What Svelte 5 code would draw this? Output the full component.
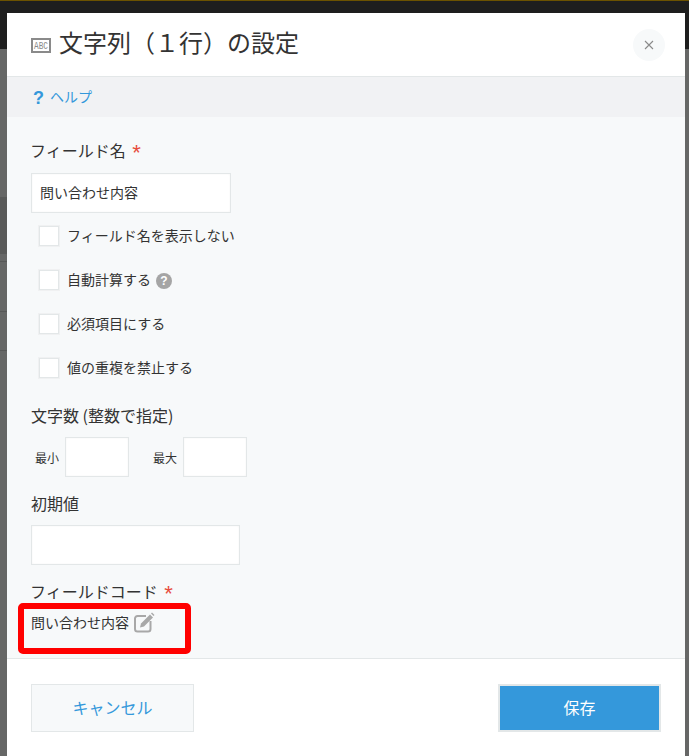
<script>
    const options = [
        { label: "フィールド名を表示しない" },
        { label: "自動計算する", help: true },
        { label: "必須項目にする" },
        { label: "値の重複を禁止する" },
    ];
</script>

<style>
    :global(body) {
        margin: 0;
        background: #666766;
    }

    .page {
        position: relative;
        width: 689px;
        height: 756px;
        overflow: hidden;
        box-sizing: border-box;
        padding: 13px 4px 0 7px;
        font-family: "Noto Sans CJK JP", "Noto Sans", sans-serif;
        color: #333;
        background: linear-gradient(#1e1e1e, #1e1e1e) 0 0 / 100% 49px no-repeat, #666766;
    }

    /* what shows of the page behind the dialog, left edge only */
    .behind {
        position: absolute;
        left: 0;
        top: 197px;
        width: 7px;
        height: 57px;
        background: #595a59;
    }

    .rule {
        position: absolute;
        left: 0;
        width: 7px;
        height: 1px;
        background: #575857;
    }

    .gold {
        position: absolute;
        left: 0;
        top: 0;
        right: 0;
        height: 1px;
        background: #6b5200;
    }

    .dialog {
        position: relative;
        height: 743px;
        background: #fff;
        display: flex;
        flex-direction: column;
    }

    .head {
        height: 64px;
        flex: none;
        box-sizing: border-box;
        border-bottom: 1px solid #e3e7e8;
        padding: 0 20px 0 24px;
        display: flex;
        align-items: center;
        gap: 8px;
    }

    .head h1 {
        margin: 0 0 5px;
        font-size: 24px;
        font-weight: 400;
        line-height: 32px;
        flex: 1;
        color: #333;
    }

    .abc {
        flex: none;
        width: 20px;
        height: 15px;
        margin-top: 1px;
    }

    .close {
        width: 32px;
        height: 32px;
        border-radius: 50%;
        background: #f7f9fa;
        display: flex;
        align-items: center;
        justify-content: center;
        flex: none;
    }

    .helpbar {
        height: 40px;
        flex: none;
        box-sizing: border-box;
        background: #f1f2f4;
        padding: 0 24px 0 26px;
        display: flex;
        align-items: center;
        gap: 6px;
        color: #3498db;
        font-size: 14px;
    }

    .helpbar span + span {
        margin-top: -2px;
    }

    .q {
        font-family: "Liberation Sans", sans-serif;
        font-weight: 700;
        font-size: 18px;
        line-height: 20px;
        margin-top: 1px;
    }

    .body {
        flex: none;
        height: 541px;
        box-sizing: border-box;
        background: #f7f9fa;
        padding: 21px 24px 0;
        position: relative;
    }

    .label {
        font-size: 16px;
        line-height: 24px;
        color: #333;
    }

    .kana {
        margin-left: -1px;
    }

    .req {
        color: #e74c3c;
        font-family: "Liberation Sans", sans-serif;
        font-size: 22px;
        line-height: 16px;
        vertical-align: -3px;
        margin-left: 3px;
    }

    .box {
        box-sizing: border-box;
        background: #fff;
        border: 1px solid #e3e7e8;
        box-shadow: inset 0 0 2px rgba(0, 0, 0, 0.06);
        font-size: 14px;
        color: #333;
    }

    .name {
        width: 200px;
        height: 40px;
        margin-top: 11px;
        padding: 0 8px;
        line-height: 36px;
    }

    .options {
        padding: 1px 0 0 8px;
    }

    .opt {
        height: 44px;
        display: flex;
        align-items: center;
        gap: 8px;
        font-size: 14px;
    }

    .opt span:not(.hint) {
        margin-top: -2px;
    }

    .check {
        width: 20px;
        height: 20px;
        box-sizing: border-box;
        background: #fff;
        border: 1px solid #e3e7e8;
        box-shadow: 0 0 0 1px #f0f1f2;
    }

    .hint {
        width: 16px;
        height: 16px;
        border-radius: 50%;
        background: #a5a5a5;
        color: #fff;
        font-family: "Liberation Sans", sans-serif;
        font-weight: 700;
        font-size: 12px;
        line-height: 16px;
        text-align: center;
        margin-left: -3px;
        margin-top: 1px;
    }

    .count {
        margin-top: 13px;
    }

    .range {
        display: flex;
        align-items: center;
        margin-top: 10px;
        padding-left: 4px;
        font-size: 12px;
    }

    .range .box {
        width: 64px;
        height: 40px;
        margin-left: 6px;
    }

    .range .second {
        margin-left: 24px;
    }

    .initial {
        margin-top: 14px;
    }

    .default {
        width: 209px;
        height: 40px;
        margin-top: 10px;
    }

    .code-label {
        margin-top: 14px;
    }

    .code {
        display: flex;
        align-items: center;
        gap: 4px;
        font-size: 14px;
        line-height: 22px;
        margin-top: 9px;
    }

    .code span {
        margin-top: -1px;
    }

    .edit {
        width: 22px;
        height: 22px;
        margin-top: -2px;
    }

    .mark {
        position: absolute;
        left: 11px;
        top: 486px;
        width: 173px;
        height: 51px;
        box-sizing: border-box;
        border: 6px solid #f00;
        border-radius: 5px;
    }

    .foot {
        flex: 1;
        box-sizing: border-box;
        border-top: 1px solid #e3e7e8;
        padding: 25px 24px 0;
        display: flex;
        justify-content: space-between;
        align-items: flex-start;
    }

    .foot button {
        height: 48px;
        box-sizing: border-box;
        font-family: inherit;
        font-size: 16px;
        border: 1px solid #e3e7e8;
        padding: 0 0 2px;
    }

    .cancel {
        width: 163px;
        background: #f7f9fa;
        color: #3498db;
    }

    .save {
        width: 163px;
        background: #3498db;
        color: #fff;
        border-width: 2px !important;
    }
</style>

<div class="page">
    <div class="gold"></div>
    <div class="behind"></div>
    <div class="rule" style="top: 261px"></div>
    <div class="rule" style="top: 311px"></div>
    <div class="rule" style="top: 350px"></div>
    <div class="dialog">
        <div class="head">
            <svg class="abc" viewBox="0 0 20 15">
                <rect x="1" y="1" width="18" height="13" fill="#fff" stroke="#8a8a8a" stroke-width="2" />
                <text x="3" y="11" font-family="Liberation Mono" font-size="10" textLength="14" lengthAdjust="spacingAndGlyphs" fill="#8a8a8a">ABC</text>
            </svg>
            <h1>文字列（１行）の設定</h1>
            <div class="close">
                <svg width="10" height="10" viewBox="0 0 10 10">
                    <path d="M1 1l8 8M9 1l-8 8" stroke="#8a8a8a" stroke-width="1.100" fill="none" />
                </svg>
            </div>
        </div>
        <div class="helpbar">
            <span class="q">?</span>
            <span>ヘルプ</span>
        </div>
        <div class="body">
            <div class="label kana">フィールド名 <span class="req">*</span></div>
            <div class="box name">問い合わせ内容</div>
            <div class="options">
                {#each options as opt}
                    <div class="opt">
                        <div class="check"></div>
                        <span>{opt.label}</span>
                        {#if opt.help}<span class="hint">?</span>{/if}
                    </div>
                {/each}
            </div>
            <div class="label count">文字数 (整数で指定)</div>
            <div class="range">
                <span>最小</span>
                <div class="box"></div>
                <span class="second">最大</span>
                <div class="box"></div>
            </div>
            <div class="label initial">初期値</div>
            <div class="box default"></div>
            <div class="label kana code-label">フィールドコード <span class="req">*</span></div>
            <div class="code">
                <span>問い合わせ内容</span>
                <svg class="edit" viewBox="0 0 22 22">
                    <path d="M13 5H4.500A2.500 2.500 0 0 0 2 7.500V18a2.500 2.500 0 0 0 2.500 2.500H15a2.500 2.500 0 0 0 2.500-2.500V10" fill="none" stroke="#a8a8a8" stroke-width="2" />
                    <path d="M8 12.500L17 3.500 20 6.500 11 15.500 7 16.500z" fill="#a8a8a8" />
                    <path d="M18 2.500l1-1 2.500 2.500-1 1z" fill="#a8a8a8" />
                </svg>
            </div>
            <div class="mark"></div>
        </div>
        <div class="foot">
            <button class="cancel">キャンセル</button>
            <button class="save">保存</button>
        </div>
    </div>
</div>
